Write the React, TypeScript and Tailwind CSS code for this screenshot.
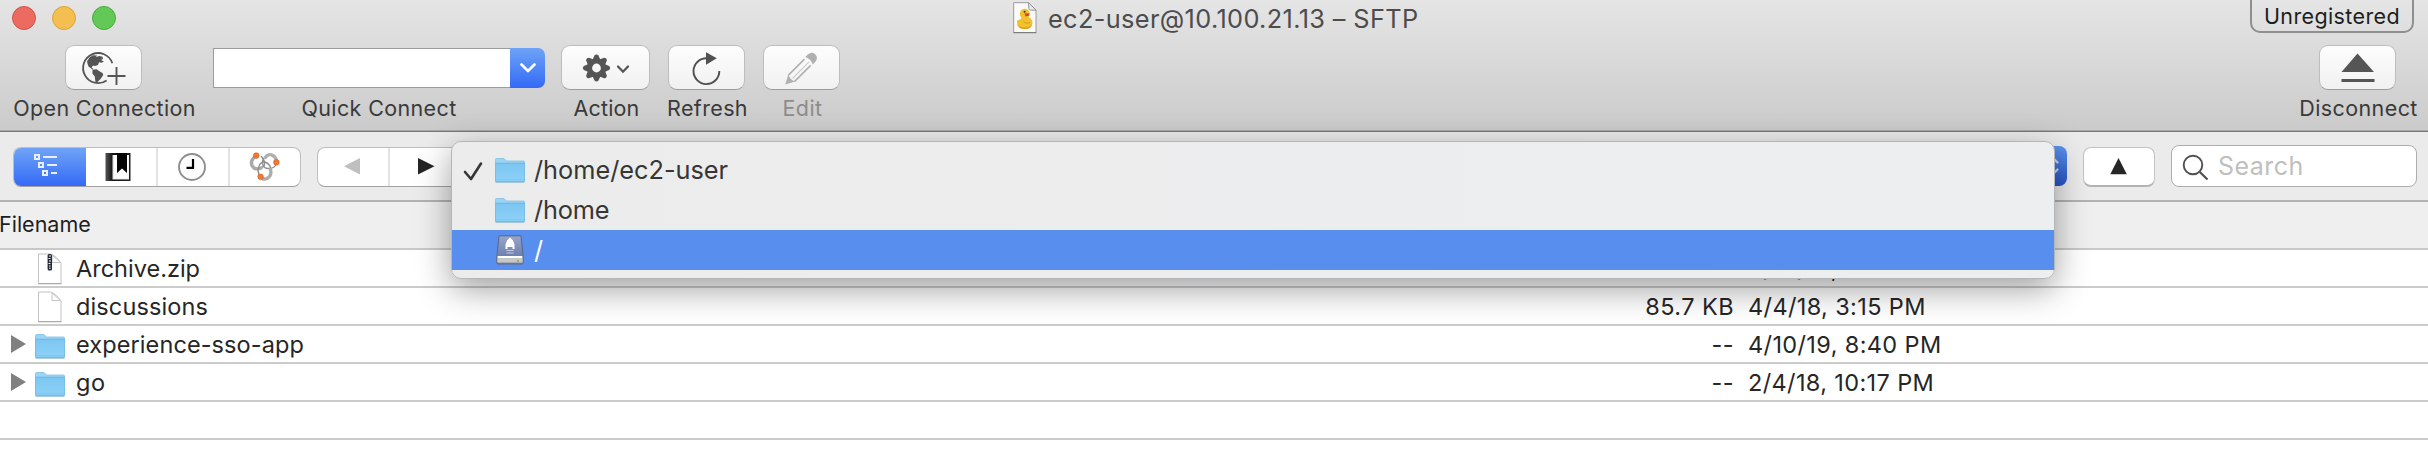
import type { ReactNode } from "react";

function ToolButton({
  label,
  width,
  labelClass,
  children,
}: {
  label: string;
  width: string;
  labelClass: string;
  children: ReactNode;
}) {
  return (
    <div className={`flex shrink-0 flex-col items-center ${width}`}>
      <div className="h-[49px]">
        <button className="block h-[45px] rounded-[9px] border border-b-[1.5px] border-[#bdbdbd] border-b-[#9d9d9d] bg-gradient-to-b from-[#fdfdfd] to-[#f1f1f1]">
          {children}
        </button>
      </div>
      <span className={`pl-[2px] text-[21.5px] leading-7 whitespace-nowrap ${labelClass}`}>{label}</span>
    </div>
  );
}

function GlobePlusIcon() {
  return (
    <svg width="75" height="42" viewBox="0 0 75 42" className="block">
      <path d="M46.3 16.2A15 15 0 1 0 40.6 33.4" fill="none" stroke="#555" strokeWidth="1.8" />
      <path
        d="M21 14.5L23.5 10.5L27 8.3L31 8.6L30 10L33.5 9L36.5 9.8L37 12L35 13L38 14.5L35.5 15.8L33 15.2L32 18L29 19L27 18.5L25.5 20.5L27.5 22L26.5 22.6L22.5 19.6L21.6 17Z"
        fill="#555"
      />
      <path d="M26.5 22.8L30.5 22.3L33.5 24.3L36.5 26L37.3 28L34.5 32L32 34.5L30.5 36L29.3 34L28.8 29.5L26.4 26.5Z" fill="#555" />
      <path d="M41.5 29h18M50.5 20v18" stroke="#555" strokeWidth="1.9" fill="none" />
    </svg>
  );
}

function GearIcon() {
  const teeth = [0, 45, 90, 135, 180, 225, 270, 315];
  return (
    <svg width="87" height="42" viewBox="0 0 87 42" className="block">
      <g transform="translate(34.5 21)" fill="#555">
        <circle r="6.9" fill="none" stroke="#555" strokeWidth="5" />
        {teeth.map((a) => (
          <path key={a} transform={`rotate(${a})`} d="M-4.2 -7.5L-2 -12.6Q0 -14.6 2 -12.6L4.2 -7.5Z" />
        ))}
      </g>
      <path d="M56 19.5l5 5.2l5-5.2" fill="none" stroke="#555" strokeWidth="2.3" strokeLinecap="round" />
    </svg>
  );
}

function RefreshIcon() {
  return (
    <svg width="75" height="42" viewBox="0 0 75 42" className="block">
      <path d="M50.3 24A12.9 12.9 0 1 1 38 11.3" fill="none" stroke="#505050" strokeWidth="1.9" />
      <path d="M37 5.2L47.8 11.3L37 17.8Z" fill="#505050" />
    </svg>
  );
}

function PencilIcon() {
  return (
    <svg width="75" height="42" viewBox="0 0 75 42" className="block">
      <g transform="translate(21.3 37.5) rotate(-45)" fill="#b0b0b0">
        <path d="M0 0L9 -4.8Q6.8 0 9 4.8Z" />
        <path d="M8.5 -4.4H31.5M8.5 4.4H31.5" stroke="#b0b0b0" strokeWidth="1.6" />
        <path d="M9.5 0.8H33" stroke="#c4c4c4" strokeWidth="1" />
        <path d="M33.5 -5.3H37Q42.6 -4.5 42.6 0T37 5.3H33.5Q36.2 0 33.5 -5.3Z" />
      </g>
    </svg>
  );
}

function EjectIcon() {
  return (
    <svg width="75" height="42" viewBox="0 0 75 42" className="block">
      <path d="M37.5 6.5L54 25H21.5Z" fill="#555" />
      <rect x="21.5" y="32" width="33" height="3" fill="#555" />
    </svg>
  );
}

function FolderIcon() {
  return (
    <svg width="30" height="26" viewBox="0 0 30 26" className="block">
      <defs>
        <linearGradient id="folderFace" x1="0" y1="0" x2="0" y2="1">
          <stop offset="0" stopColor="#7cc6f2" />
          <stop offset="1" stopColor="#8dd2f8" />
        </linearGradient>
      </defs>
      <path d="M0.5 1.5Q0.5 0.5 1.5 0.5H9L11.5 3H28.5Q29.5 3 29.5 4V22H0.5Z" fill="#9bd5f6" stroke="#7fbfe4" strokeWidth="0.8" />
      <path d="M0.5 5H29.5V23Q29.5 24 28.5 24H1.5Q0.5 24 0.5 23Z" fill="url(#folderFace)" />
      <path d="M0.5 5.2H29.5" stroke="#6db6e2" strokeWidth="0.9" />
      <path d="M0.5 5V23.5M29.5 5V23.5" stroke="#74bbe3" strokeWidth="0.8" />
      <path d="M1 21.7H29" stroke="#78bfe9" strokeWidth="0.7" />
      <path d="M0.5 24H29.5" stroke="#5e9fc6" strokeWidth="1" />
    </svg>
  );
}

function FileIcon({ zip = false }: { zip?: boolean }) {
  return (
    <svg width="26" height="32" viewBox="0 0 26 32" className="block">
      <path d="M1.5 1H13.5Q18 2 24 10V30.5H1.5Z" fill="#fff" stroke="#c2c2c2" strokeWidth="1" />
      <path d="M1 30.7H24.5" stroke="#aaa" strokeWidth="1.2" />
      <path d="M15 2.2V9.5H23.5" fill="#fff" stroke="#c4c4c4" strokeWidth="1" />
      <path d="M15 2.2Q20 4 23.5 9.5Z" fill="#f4f4f4" stroke="#c4c4c4" strokeWidth="0.8" />
      {zip && (
        <g>
          <rect x="10.6" y="1" width="4.4" height="16.5" rx="1.5" fill="#222c36" />
          <path d="M12 3h2M11.5 5.5h2M12 8h2M11.5 10.5h2M12 13h1.6M12 15.2h1.6" stroke="#fff" strokeWidth="1" />
        </g>
      )}
    </svg>
  );
}

function DiskIcon() {
  return (
    <svg width="28" height="30" viewBox="0 0 28 30" className="block">
      <defs>
        <linearGradient id="diskTop" x1="0" y1="0" x2="0" y2="1">
          <stop offset="0" stopColor="#96a5c9" />
          <stop offset="1" stopColor="#6e80b2" />
        </linearGradient>
      </defs>
      <path d="M3 0.8H25L27.2 21V28Q27.2 29 26 29H2Q0.8 29 0.8 28V21Z" fill="#7483a6" stroke="#5d6a88" strokeWidth="1" />
      <path d="M3.6 1.4H24.4L26 21H2Z" fill="url(#diskTop)" />
      <path d="M1.6 21H26.4V23.5H1.6Z" fill="#fff" />
      <path d="M1.4 23.5H26.6V27.6H1.4Z" fill="#c9c7c1" />
      <path d="M14 2.5L17 5.5L18.5 9.5V14H16.5V12H11.5V14H9.5V9.5L11 5.5Z" fill="#fff" />
      <path d="M10.5 15.5H17.5M10.5 18H17.5" stroke="#c3cce4" strokeWidth="1.2" />
      <circle cx="22" cy="26" r="0.9" fill="#9a9640" />
    </svg>
  );
}

function DuckDocIcon() {
  return (
    <svg width="24" height="32" viewBox="0 0 24 32" className="block">
      <path d="M0.7 0.7H15.5L23 8.2V30.5H0.7Z" fill="#fafafa" stroke="#9a9a9a" strokeWidth="1" />
      <path d="M0.4 30.7H23.3" stroke="#777" strokeWidth="1" />
      <path d="M15.5 0.7L23 8.2H17.5Q16 8 15.8 6.5Z" fill="#e9e9e9" stroke="#8e8e8e" strokeWidth="0.9" />
      <path d="M4 19Q4.5 17.5 6.5 17.5Q8.5 17.3 8.4 15.5A5 5 0 1 1 15.6 15Q20 17.5 19.4 21.5Q18.5 27 11.5 27Q5.4 27 4.2 22.5Z" fill="#f2c12e" />
      <path d="M5 23Q8 26 13 25.5Q18 24.8 19.2 21.5Q18.6 27 11.5 27Q6.5 27 5 23Z" fill="#dd9d1c" />
      <path d="M10.5 19.5Q13 22.5 17 20.5" stroke="#d79b1d" strokeWidth="1" fill="none" />
      <path d="M11.5 11.6L16.4 11.2L16 13.8L12.5 14.4Z" fill="#d9452b" />
      <circle cx="11.6" cy="9.8" r="1" fill="#3b3420" />
    </svg>
  );
}

function OutlineIcon() {
  return (
    <svg width="73" height="40" viewBox="0 0 73 40" className="block" fill="none" stroke="#e6eeff" strokeWidth="2">
      <rect x="22" y="8" width="4" height="4" />
      <path d="M30 10H44" />
      <rect x="26" y="16" width="4" height="4" />
      <path d="M34 18H44" />
      <rect x="30" y="24" width="4" height="4" />
      <path d="M38 26H44" />
    </svg>
  );
}

function BookmarkIcon() {
  return (
    <svg width="26" height="28" viewBox="0 0 26 28" className="block">
      <defs>
        <linearGradient id="spine" x1="0" y1="0" x2="1" y2="0">
          <stop offset="0" stopColor="#555" />
          <stop offset="0.3" stopColor="#111" />
          <stop offset="1" stopColor="#222" />
        </linearGradient>
      </defs>
      <rect x="0.5" width="25" height="28" fill="url(#spine)" />
      <rect x="7.5" y="2" width="16.5" height="24.5" fill="#e8e8e8" />
      <rect x="9" y="2" width="14.5" height="23.5" fill="#fff" />
      <path d="M12 0H22V20L17 15.5L12 20Z" fill="#050505" />
    </svg>
  );
}

function ClockIcon() {
  return (
    <svg width="30" height="30" viewBox="0 0 30 30" className="block">
      <circle cx="15" cy="15" r="13" fill="#fcfcfc" stroke="#8e8e8e" strokeWidth="1.9" />
      <path d="M16 7V15.8H9.5" fill="none" stroke="#000" strokeWidth="2.2" />
    </svg>
  );
}

function BonjourIcon() {
  return (
    <svg width="32" height="32" viewBox="0 0 32 32" className="block">
      <g fill="none" strokeLinecap="round">
        <path d="M7.5 5Q-0.5 10 5 17Q10 20 16 15Q18 11 13.5 5.5" stroke="#8f8f8f" strokeWidth="1.4" />
        <path d="M5.5 7Q1 12.5 6 17Q9 18.8 13 17" stroke="#a9a9a9" strokeWidth="3.4" />
        <path d="M28.5 12Q28 17 21 17.5Q14 18 14.5 10Q17 3 24 4" stroke="#8f8f8f" strokeWidth="1.4" />
        <path d="M17.5 6.5Q19.5 3 23.5 3.8Q27.5 5 28.5 10" stroke="#b0b0b0" strokeWidth="3.4" />
        <path d="M12.5 26Q8 20 12 13Q17 8 22 15Q25 22 19.5 27" stroke="#8f8f8f" strokeWidth="1.4" />
        <path d="M22.5 18.5Q24 24 20 27Q17.5 28.3 15 28" stroke="#adadad" strokeWidth="3.4" />
      </g>
      <circle cx="8.2" cy="4.6" r="2.8" fill="#f07a35" stroke="#d1571a" strokeWidth="0.6" />
      <circle cx="28.4" cy="11.3" r="2.8" fill="#f07a35" stroke="#d1571a" strokeWidth="0.6" />
      <circle cx="12.6" cy="25.8" r="2.8" fill="#f07a35" stroke="#d1571a" strokeWidth="0.6" />
    </svg>
  );
}

const files = [
  { kind: "zip", name: "Archive.zip", nameClass: "", size: "8.6 KB", date: "4/10/19, 8:39 PM" },
  { kind: "file", name: "discussions", nameClass: "tracking-[0.12px]", size: "85.7 KB", date: "4/4/18, 3:15 PM" },
  { kind: "folder", name: "experience-sso-app", nameClass: "tracking-[0.1px]", size: "--", date: "4/10/19, 8:40 PM" },
  { kind: "folder", name: "go", nameClass: "tracking-[0.5px]", size: "--", date: "2/4/18, 10:17 PM" },
];

export default function App() {
  return (
    <div className="relative h-[476px] w-[2428px] overflow-hidden bg-white font-['Inter','Liberation_Sans',sans-serif] text-[#262626]">
      <header className="h-[132px] border-b border-[#777]">
        <div className="flex h-[131px] flex-col border-b border-[#a8a8a8] bg-gradient-to-b from-[#e5e5e5] to-[#cbcbcb]">
          <div className="flex h-9 items-center pl-3">
            <div className="flex w-[1001px] gap-4">
              <span className="size-6 rounded-full border border-[#d8504a] bg-[#ec6b60]" />
              <span className="size-6 rounded-full border border-[#dca33a] bg-[#f4bf50]" />
              <span className="size-6 rounded-full border border-[#4cab3e] bg-[#62c856]" />
            </div>
            <DuckDocIcon />
            <span className="pt-[1px] pl-[11px] text-[25.3px] leading-9 tracking-[0.37px] whitespace-nowrap text-[#4c4c4c]">
              ec2-user@10.100.21.13 – SFTP
            </span>
            <div className="mt-[-14px] mr-[14px] ml-auto flex h-[44px] w-[164px] items-end rounded-[10px] border-2 border-[#8f8f8f] pb-[1px] pl-[12px] text-[21.5px] leading-7 tracking-[0.37px] text-[#1d1d1d]">
              Unregistered
            </div>
          </div>

          <div className="flex pt-[9px] pr-[12px] pl-[14px] text-[#3a3a3a]">
            <ToolButton label="Open Connection" width="w-[179px]" labelClass="tracking-[0.32px]">
              <GlobePlusIcon />
            </ToolButton>
            <div className="ml-[20px] flex w-[332px] flex-col items-center">
              <div className="h-[49px] w-full pt-[3px]">
                <div className="flex h-10 w-full">
                  <div className="flex-1 border border-r-0 border-[#9c9c9c] bg-white" />
                  <div className="flex w-[35px] items-center justify-center rounded-r-[7px] bg-gradient-to-b from-[#6fa3f6] to-[#3468f6]">
                    <svg width="18" height="12" viewBox="0 0 18 12">
                      <path d="M2.5 2.5L9 9L15.5 2.5" fill="none" stroke="#fff" strokeWidth="2.7" strokeLinecap="round" strokeLinejoin="round" />
                    </svg>
                  </div>
                </div>
              </div>
              <span className="text-[21.5px] leading-7 tracking-[0.37px]">Quick Connect</span>
            </div>
            <div className="ml-[16px] flex gap-[18px]">
              <ToolButton label="Action" width="w-[89px]" labelClass="tracking-[0.15px]">
                <GearIcon />
              </ToolButton>
              <ToolButton label="Refresh" width="w-[77px]" labelClass="tracking-[0.36px]">
                <RefreshIcon />
              </ToolButton>
              <ToolButton label="Edit" width="w-[77px]" labelClass="tracking-[0.4px] text-[#8c8c8c]">
                <PencilIcon />
              </ToolButton>
            </div>
            <div className="ml-auto">
              <ToolButton label="Disconnect" width="w-[117px]" labelClass="tracking-[0.4px]">
                <EjectIcon />
              </ToolButton>
            </div>
          </div>
        </div>
      </header>

      <div className="flex h-[70px] items-start border-b-2 border-[#b2b2b2] bg-[#ebebeb] pl-[13px]">
        <div className="mt-[15px] flex h-10 w-[288px] overflow-hidden rounded-[8px] border border-b-[1.5px] border-[#bebebe] border-b-[#a2a2a2] bg-white">
          <div className="-mt-px -ml-px h-10 w-[73px] shrink-0 bg-gradient-to-b from-[#72a4f6] to-[#3467f6]">
            <OutlineIcon />
          </div>
          <div className="flex w-[72px] shrink-0 items-center justify-center border-r-2 border-[#e2e2e2] pr-[6px]">
            <BookmarkIcon />
          </div>
          <div className="flex w-[72px] shrink-0 items-center justify-center border-r-2 border-[#e2e2e2] pr-[2px]">
            <ClockIcon />
          </div>
          <div className="flex flex-1 items-center justify-center pr-[2px]">
            <BonjourIcon />
          </div>
        </div>

        <div className="mt-[15px] ml-[16px] flex h-10 w-[160px] rounded-[8px] border border-b-[1.5px] border-[#bebebe] border-b-[#a2a2a2] bg-white">
          <div className="w-[72px] border-r-2 border-[#e2e2e2]">
            <svg width="70" height="38" viewBox="0 0 70 38">
              <path d="M42 10V26.5L26 18.2Z" fill="#bfbfbf" />
            </svg>
          </div>
          <svg width="72" height="38" viewBox="0 0 72 38">
            <path d="M28 10V26.5L44.5 18.2Z" fill="#262626" />
          </svg>
        </div>

        <div className="mt-[14px] ml-auto flex h-10 w-[40px] justify-end rounded-[8px] bg-gradient-to-b from-[#5b92f1] to-[#2a55c8]">
          <svg width="22" height="40" viewBox="0 0 22 40">
            <path d="M3 16.5L8 12L12.5 16.5M3 23.5L8 28L12.5 23.5" fill="none" stroke="#c9d9fb" strokeWidth="2.4" strokeLinecap="round" strokeLinejoin="round" />
          </svg>
        </div>

        <div className="mt-[15px] ml-[16px] flex h-10 w-[72px] justify-center rounded-[8px] border border-b-2 border-[#c3c3c3] border-b-[#b3b3b3] bg-white">
          <svg width="70" height="37" viewBox="0 0 70 37">
            <path d="M34.5 10L42.8 26.2H26.3Z" fill="#262626" />
          </svg>
        </div>

        <div className="mt-[13px] mr-[11px] ml-[16px] flex h-[42px] w-[246px] items-center rounded-[8px] border border-[#adadad] bg-white">
          <svg width="46" height="40" viewBox="0 0 46 40">
            <circle cx="21" cy="19" r="9.3" fill="none" stroke="#505050" strokeWidth="1.9" />
            <path d="M27.8 26L35.5 33.5" stroke="#505050" strokeWidth="2.2" />
          </svg>
          <span className="text-[25px] leading-9 tracking-[0.45px] text-[#bfbfbf]">Search</span>
        </div>
      </div>

      <div className="flex h-[48px] border-b-2 border-[#c8c8c8] bg-[#efefef] pt-[8px]">
        <span className="-ml-px text-[21.5px] leading-7 text-[#1e1e1e]">Filename</span>
      </div>

      {files.map((f) => (
        <div key={f.name} className="flex h-[38px] border-b-2 border-[#cbcbcb] text-[23.5px] leading-[38px]">
          <div className="w-[35px] pt-[9px] pl-[11px]">
            {f.kind === "folder" && (
              <svg width="15" height="18" viewBox="0 0 15 18" className="block">
                <path d="M0 0L15 9L0 18Z" fill="#808080" />
              </svg>
            )}
          </div>
          <div className="w-[30px]">
            {f.kind === "folder" ? (
              <div className="pt-[8px]">
                <FolderIcon />
              </div>
            ) : (
              <div className="pt-[3px] pl-[2px]">
                <FileIcon zip={f.kind === "zip"} />
              </div>
            )}
          </div>
          <div className={`w-[1469px] pl-[11px] whitespace-nowrap ${f.nameClass}`}>{f.name}</div>
          <div className="w-[200px] text-right tracking-[0.44px]">{f.size}</div>
          <div className="pl-[14px] tracking-[0.37px] whitespace-nowrap">{f.date}</div>
        </div>
      ))}
      <div className="h-[38px] border-b-2 border-[#cbcbcb]" />

      <div className="absolute top-[141px] left-[451px] h-[138px] w-[1604px] rounded-[10px] border border-[#b4b6b7] bg-gradient-to-r from-[#ececec] to-[#eceef0] pt-[8px] shadow-[0_10px_34px_rgba(0,0,0,0.38)]">
        <div className="flex h-10 pl-px text-[25.3px] leading-10 text-[#363636]">
          <svg width="42" height="40" viewBox="0 0 42 40">
            <path d="M12 22L18 29L28 13.5" fill="none" stroke="#363636" strokeWidth="2.6" strokeLinecap="round" strokeLinejoin="round" />
          </svg>
          <div className="pt-[8px]">
            <FolderIcon />
          </div>
          <span className="pl-[9px]">/home/ec2-user</span>
        </div>
        <div className="flex h-10 pl-[43px] text-[25.3px] leading-10 text-[#363636]">
          <div className="pt-[8px]">
            <FolderIcon />
          </div>
          <span className="pl-[9px] tracking-[-0.15px]">/home</span>
        </div>
        <div className="flex h-10 bg-[#588fef] pl-[44px] text-[25.3px] leading-10 text-white">
          <div className="pt-[5px]">
            <DiskIcon />
          </div>
          <span className="pl-[10px]">/</span>
        </div>
      </div>
    </div>
  );
}
